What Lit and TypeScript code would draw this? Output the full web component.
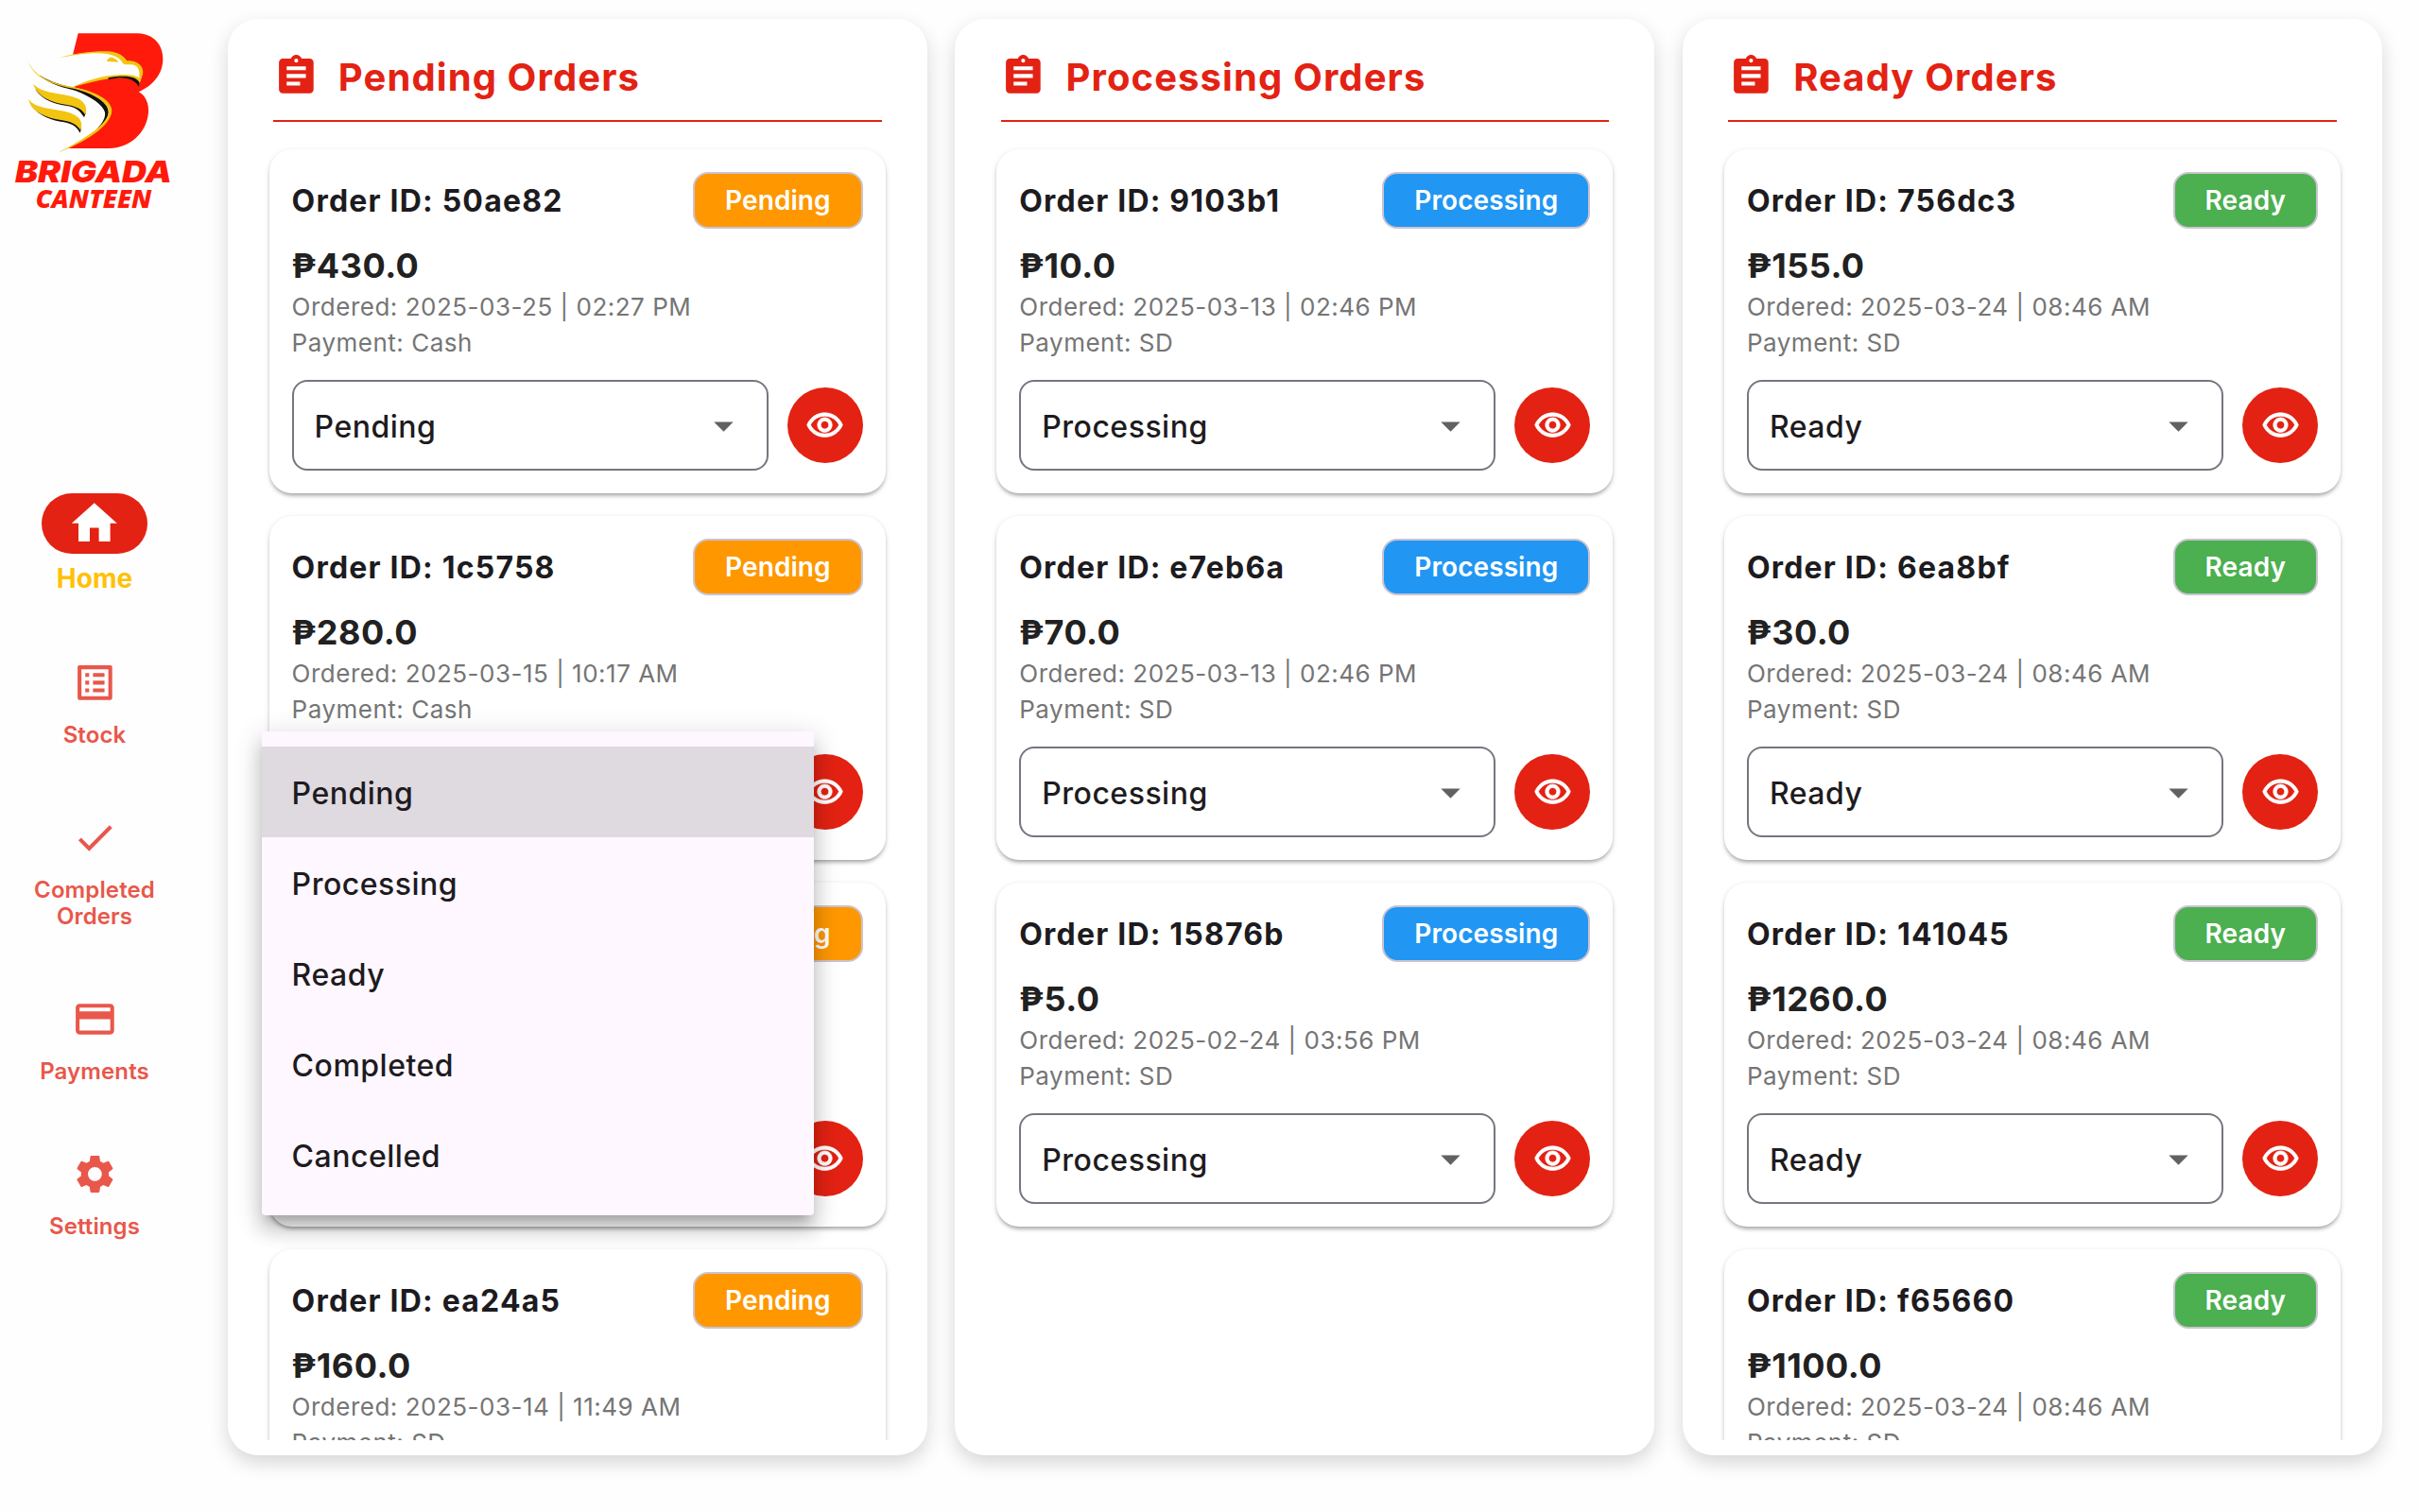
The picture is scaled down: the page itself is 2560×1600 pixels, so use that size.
import { LitElement, html, css, svg, nothing } from "lit";
import { customElement, property } from "lit/decorators.js";
import { classMap } from "lit/directives/class-map.js";

type Status = "Pending" | "Processing" | "Ready";

interface Order {
  id: string;
  price: string;
  ordered: string;
  payment: string;
  open?: boolean;
}

const ICONS = {
  home: svg`<path d="M10 20v-6h4v6h5v-8h3L12 3 2 12h3v8z"/>`,
  stock: svg`<path d="M19 5v14H5V5h14m1.1-2H3.9c-.5 0-.9.4-.9.9v16.2c0 .4.4.9.9.9h16.2c.4 0 .9-.5.9-.9V3.9c0-.5-.5-.9-.9-.9zM11 7h6v2h-6V7zm0 4h6v2h-6v-2zm0 4h6v2h-6v-2zM7 7h2v2H7V7zm0 4h2v2H7v-2zm0 4h2v2H7v-2z"/>`,
  check: svg`<path d="M9 16.17L4.83 12l-1.42 1.41L9 19 21 7l-1.41-1.41z"/>`,
  card: svg`<path d="M20 4H4c-1.11 0-1.99.89-1.99 2L2 18c0 1.11.89 2 2 2h16c1.11 0 2-.89 2-2V6c0-1.11-.89-2-2-2zm0 14H4v-6h16v6zm0-10H4V6h16v2z"/>`,
  gear: svg`<path d="M19.14 12.94c.04-.3.06-.61.06-.94 0-.32-.02-.64-.07-.94l2.03-1.58c.18-.14.23-.41.12-.61l-1.92-3.32c-.12-.22-.37-.29-.59-.22l-2.39.96c-.5-.38-1.03-.7-1.62-.94l-.36-2.54c-.04-.24-.24-.41-.48-.41h-3.84c-.24 0-.43.17-.47.41l-.36 2.54c-.59.24-1.13.57-1.62.94l-2.39-.96c-.22-.08-.47 0-.59.22L2.74 8.87c-.12.21-.08.47.12.61l2.03 1.58c-.05.3-.09.63-.09.94s.02.64.07.94l-2.03 1.58c-.18.14-.23.41-.12.61l1.92 3.32c.12.22.37.29.59.22l2.39-.96c.5.38 1.03.7 1.62.94l.36 2.54c.05.24.24.41.48.41h3.84c.24 0 .44-.17.47-.41l.36-2.54c.59-.24 1.13-.56 1.62-.94l2.39.96c.22.08.47 0 .59-.22l1.92-3.32c.12-.22.07-.47-.12-.61l-2.01-1.58zM12 15.6c-1.98 0-3.6-1.62-3.6-3.6s1.62-3.6 3.6-3.6 3.6 1.62 3.6 3.6-1.62 3.6-3.6 3.6z"/>`,
  clipboard: svg`<path d="M19 3h-4.18C14.4 1.84 13.3 1 12 1c-1.3 0-2.4.84-2.82 2H5c-1.1 0-2 .9-2 2v14c0 1.1.9 2 2 2h14c1.1 0 2-.9 2-2V5c0-1.1-.9-2-2-2zm-7 0c.55 0 1 .45 1 1s-.45 1-1 1-1-.45-1-1 .45-1 1-1zm2 14H7v-2h7v2zm3-4H7v-2h10v2zm0-4H7V7h10v2z"/>`,
  eye: svg`<path d="M12 6c3.79 0 7.17 2.13 8.82 5.5C19.17 14.87 15.79 17 12 17s-7.17-2.13-8.82-5.5C4.83 8.13 8.21 6 12 6m0-2C7 4 2.73 7.11 1 11.5 2.73 15.89 7 19 12 19s9.27-3.11 11-7.5C21.27 7.11 17 4 12 4zm0 5c1.38 0 2.5 1.12 2.5 2.5S13.38 14 12 14s-2.5-1.12-2.5-2.5S10.62 9 12 9m0-2c-2.48 0-4.5 2.02-4.5 4.5S9.52 16 12 16s4.5-2.02 4.5-4.5S14.48 7 12 7z"/>`,
  arrow: svg`<path d="M7 10l5 5 5-5z"/>`,
};

const icon = (name: keyof typeof ICONS, cls: string) =>
  html`<svg class=${cls} viewBox="0 0 24 24" fill="currentColor" aria-hidden="true">${ICONS[name]}</svg>`;

@customElement("brand-logo")
export class BrandLogo extends LitElement {
  static styles = css`
    :host { display: block; }
    svg { display: block; width: 220px; height: 230px; }
    .red { fill: #ff1a0b; }
    .gold { fill: #f2c511; }
    .ink { fill: #14100c; }
    .name { font: italic 900 92px Inter, "Liberation Sans", sans-serif; }
    .sub { font: italic 800 81px "Open Sans", "Noto Sans", sans-serif; }
  `;
  render() {
    return html`<svg viewBox="0 0 660 690" role="img" aria-label="Brigada Canteen">
      <path class="red" d="M248 76H438C488 78 518 112 517 160C516 206 484 243 440 262C462 272 473 300 471 326C466 392 412 440 345 441H217C292 398 352 360 354 322C352 288 300 262 232 247C270 228 330 213 385 211C412 211 430 220 441 240L452 205C455 182 438 163 403 166C390 145 370 136 320 136C290 136 260 139 231 144Z"/>
      <path class="gold" d="M183 155C230 139 300 131 345 133C376 136 394 148 402 163C442 160 462 188 451 212L441 240C427 215 392 216 350 219C310 224 270 236 232 247C274 225 328 209 382 207C410 206 432 209 442 218C444 195 440 180 424 176C408 172 396 178 390 171C380 150 350 139 310 139C260 139 222 147 183 155Z"/>
      <path class="ink" d="M344 222C395 211 426 219 441 245L443 233C434 214 404 207 344 217Z"/>
      <path class="gold" d="M339 165Q343 151 356 152Q370 156 377 167Z"/>
      <path class="ink" d="M125 208C165 236 215 243 245 252C305 270 348 298 344 330C340 352 320 372 300 387C324 364 336 344 333 326C326 302 290 278 240 258C205 249 160 240 125 208Z"/>
      <path class="gold" d="M87 159C108 216 168 236 232 246C302 260 356 288 355 322C352 372 268 422 182 456C262 414 344 366 345 324C344 294 292 266 238 252C172 240 106 222 87 159Z"/>
      <path class="ink" d="M112 254C140 292 175 299 213 306C245 311 255 324 267 343L272 329C262 308 240 298 205 294Z"/>
      <path class="gold" d="M105 236C130 264 178 264 224 275C264 285 281 304 271 335C256 307 228 306 192 299C150 290 116 270 105 236Z"/>
      <path class="ink" d="M98 304C128 342 165 352 203 358C232 363 244 374 254 392L258 378C248 356 226 348 190 344Z"/>
      <path class="gold" d="M90 284C112 315 164 313 208 324C250 335 266 352 256 384C240 356 212 355 176 348C134 338 98 320 90 284Z"/>
      <text class="red name" x="48" y="548" textLength="498" lengthAdjust="spacingAndGlyphs">BRIGADA</text>
      <text class="red sub" x="113" y="629" textLength="368" lengthAdjust="spacingAndGlyphs">CANTEEN</text>
    </svg>`;
  }
}

@customElement("nav-rail")
export class NavRail extends LitElement {
  static styles = css`
    :host { display: flex; flex-direction: column; width: 200px; padding-top: 10px; box-sizing: border-box; }
    nav { display: flex; flex-direction: column; align-items: center; gap: 62px; padding: 282px 0 0 0; }
    .item { display: flex; flex-direction: column; align-items: center; gap: 10px; color: #e9574b; }
    .pill { display: flex; align-items: center; justify-content: center; width: 112px; height: 64px; border-radius: 32px; }
    .ico { width: 48.8px; height: 48.8px; }
    .label { font-size: 24px; line-height: 28px; font-weight: 600; letter-spacing: .12px; text-align: center; max-width: 160px; }
    .active .pill { background: #e32213; color: #fff; }
    .active .ico { width: 57.6px; height: 57.6px; }
    .active .label { font-size: 28px; line-height: 32px; font-weight: 700; letter-spacing: 0; color: #ffc107; }
  `;
  private items: { icon: keyof typeof ICONS; label: string; active?: boolean }[] = [
    { icon: "home", label: "Home", active: true },
    { icon: "stock", label: "Stock" },
    { icon: "check", label: "Completed Orders" },
    { icon: "card", label: "Payments" },
    { icon: "gear", label: "Settings" },
  ];
  render() {
    return html`<brand-logo></brand-logo>
      <nav>
        ${this.items.map(
          (i) => html`<div class=${classMap({ item: true, active: !!i.active })}>
            <div class="pill">${icon(i.icon, "ico")}</div>
            <div class="label">${i.label}</div>
          </div>`
        )}
      </nav>`;
  }
}

@customElement("status-select")
export class StatusSelect extends LitElement {
  static styles = css`
    :host { display: block; position: relative; }
    .field { display: flex; align-items: center; justify-content: space-between; height: 96px; box-sizing: border-box; border: 2px solid #79747e; border-radius: 16px; padding: 0 21px 0 22px; }
    .value, .option { font-size: 32px; font-weight: 500; letter-spacing: .5px; color: #1d1b20; }
    .value { padding-top: 2px; }
    .arrow { width: 49px; height: 49px; color: #616161; }
    .menu { position: absolute; z-index: 10; left: -32px; top: -16px; width: 584px; padding: 16px 0; box-sizing: border-box; background: #fef7ff; border-radius: 4px; box-shadow: 0 10px 10px -6px rgba(0,0,0,.2), 0 16px 20px 2px rgba(0,0,0,.14), 0 6px 28px 4px rgba(0,0,0,.12); }
    .option { display: flex; align-items: center; height: 96px; box-sizing: border-box; padding: 2px 32px 0; }
    .selected { background: #dfd9e0; }
  `;
  @property() value = "";
  @property({ type: Boolean }) open = false;
  private options = ["Pending", "Processing", "Ready", "Completed", "Cancelled"];
  render() {
    return html`<div class="field">${this.open ? html`<span></span>` : html`<span class="value">${this.value}</span>`}${icon("arrow", "arrow")}</div>
      ${this.open
        ? html`<div class="menu">
            ${this.options.map((o) => html`<div class=${classMap({ option: true, selected: o === this.value })}>${o}</div>`)}
          </div>`
        : nothing}`;
  }
}

@customElement("order-card")
export class OrderCard extends LitElement {
  static styles = css`
    :host { display: block; height: 364px; flex: none; box-sizing: border-box; padding: 24px; background: #fff; border-radius: 24px; box-shadow: 0 4px 4px -2px rgba(0,0,0,.24), 0 2px 4px rgba(0,0,0,.14), 0 2px 8px rgba(0,0,0,.06); }
    .top { display: flex; align-items: center; justify-content: space-between; height: 60px; }
    .id { font-size: 32px; font-weight: 700; letter-spacing: 1.2px; color: #1d1b20; white-space: pre; }
    .badge { display: flex; align-items: center; height: 60px; box-sizing: border-box; padding: 0 32px; border: 2px solid #cac4d0; border-radius: 16px; color: #fff; font-size: 28px; font-weight: 600; letter-spacing: .08px; }
    .Pending { background: #ff9800; }
    .Processing { background: #2196f3; }
    .Ready { background: #4caf50; }
    .price { height: 48px; margin-top: 15px; line-height: 48px; font-size: 36px; font-weight: 700; letter-spacing: .5px; color: #212121; }
    .line { height: 38px; line-height: 38px; font-size: 26px; letter-spacing: .5px; color: #757575; white-space: pre; }
    .price + .line { margin-top: 1px; }
    .actions { display: grid; grid-template-columns: 1fr 80px; gap: 20px; align-items: center; margin-top: 20px; }
    .view { display: flex; align-items: center; justify-content: center; width: 80px; height: 80px; border-radius: 50%; background: #e32213; color: #fff; }
    .eye { width: 41px; height: 41px; stroke: #fff; stroke-width: .45; overflow: visible; }
  `;
  @property({ attribute: false }) order!: Order;
  @property() status: Status = "Pending";
  render() {
    const o = this.order;
    return html`<div class="top">
        <span class="id">${o.id ? `Order ID: ${o.id}` : nothing}</span>
        <span class="badge ${this.status}">${this.status}</span>
      </div>
      <div class="price">${o.price}</div>
      <div class="line">${o.ordered ? `Ordered: ${o.ordered}` : nothing}</div>
      <div class="line">${o.payment ? `Payment: ${o.payment}` : nothing}</div>
      <div class="actions">
        <status-select .value=${this.status} .open=${!!o.open}></status-select>
        <div class="view">${icon("eye", "eye")}</div>
      </div>`;
  }
}

@customElement("order-column")
export class OrderColumn extends LitElement {
  static styles = css`
    :host { display: flex; flex-direction: column; min-width: 0; height: 1520px; box-sizing: border-box; padding: 36px 0 16px; background: #fff; border-radius: 32px; box-shadow: 0 8px 20px rgba(0,0,0,.16); }
    header { display: flex; align-items: center; gap: 20.5px; height: 73px; box-sizing: border-box; margin: 0 48px 0 48.3px; padding-bottom: 21px; border-bottom: 2px solid #e32213; color: #e32213; }
    .ico { width: 48.8px; height: 48.8px; flex: none; margin-top: -1px; margin-left: -.4px; }
    h2 { margin: 0; padding-top: 2px; font-size: 40px; line-height: 48px; font-weight: 700; letter-spacing: 1.1px; }
    .list { display: flex; flex-direction: column; gap: 24px; flex: 1; min-height: 0; overflow: hidden; padding: 29px 44px 0; }
  `;
  @property() status: Status = "Pending";
  @property({ attribute: false }) orders: Order[] = [];
  render() {
    return html`<header>${icon("clipboard", "ico")}<h2>${this.status} Orders</h2></header>
      <div class="list">
        ${this.orders.map((o) => html`<order-card .order=${o} .status=${this.status}></order-card>`)}
      </div>`;
  }
}

const COLUMNS: { status: Status; orders: Order[] }[] = [
  {
    status: "Pending",
    orders: [
      { id: "50ae82", price: "₱430.0", ordered: "2025-03-25 | 02:27 PM", payment: "Cash" },
      { id: "1c5758", price: "₱280.0", ordered: "2025-03-15 | 10:17 AM", payment: "Cash", open: true },
      { id: "", price: "", ordered: "", payment: "" },
      { id: "ea24a5", price: "₱160.0", ordered: "2025-03-14 | 11:49 AM", payment: "SD" },
    ],
  },
  {
    status: "Processing",
    orders: [
      { id: "9103b1", price: "₱10.0", ordered: "2025-03-13 | 02:46 PM", payment: "SD" },
      { id: "e7eb6a", price: "₱70.0", ordered: "2025-03-13 | 02:46 PM", payment: "SD" },
      { id: "15876b", price: "₱5.0", ordered: "2025-02-24 | 03:56 PM", payment: "SD" },
    ],
  },
  {
    status: "Ready",
    orders: [
      { id: "756dc3", price: "₱155.0", ordered: "2025-03-24 | 08:46 AM", payment: "SD" },
      { id: "6ea8bf", price: "₱30.0", ordered: "2025-03-24 | 08:46 AM", payment: "SD" },
      { id: "141045", price: "₱1260.0", ordered: "2025-03-24 | 08:46 AM", payment: "SD" },
      { id: "f65660", price: "₱1100.0", ordered: "2025-03-24 | 08:46 AM", payment: "SD" },
    ],
  },
];

@customElement("app-root")
export class AppRoot extends LitElement {
  static styles = css`
    :host { display: flex; width: 2560px; height: 1600px; overflow: hidden; background: #fefefe; font-family: Inter, "Liberation Sans", sans-serif; }
    nav-rail { flex: none; }
    main { display: grid; grid-template-columns: repeat(3, minmax(0, 1fr)); gap: 29.6px; flex: 1; min-width: 0; padding: 20px 40px 0 40.6px; }
  `;
  render() {
    return html`<nav-rail></nav-rail>
      <main>
        ${COLUMNS.map((c) => html`<order-column .status=${c.status} .orders=${c.orders}></order-column>`)}
      </main>`;
  }
}
